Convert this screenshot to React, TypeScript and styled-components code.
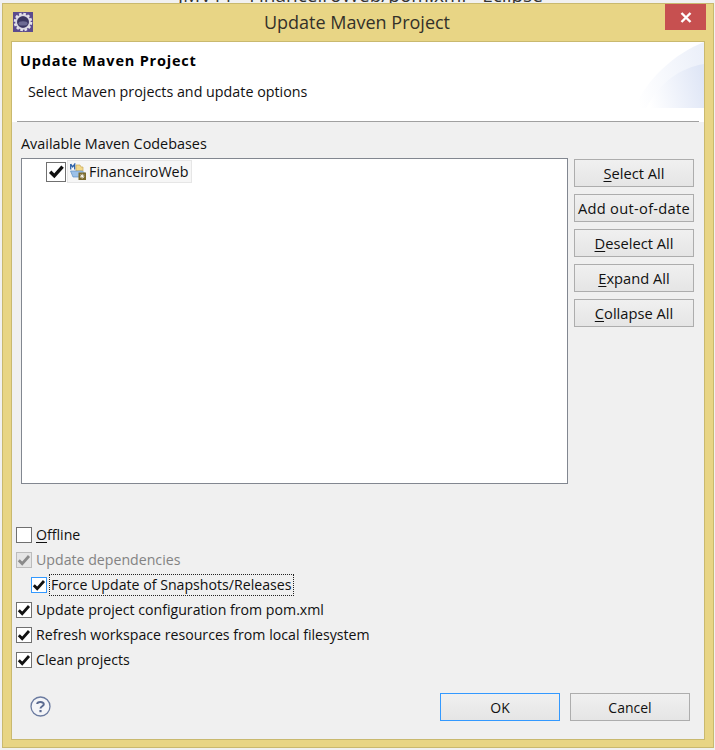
import React from "react";
import styled, { createGlobalStyle } from "styled-components";

const GlobalStyle = createGlobalStyle`
  html, body {
    margin: 0;
    padding: 0;
    background: #f1f1f1;
    overflow: hidden;
  }
  body {
    font-family: "Open Sans", "Liberation Sans", sans-serif;
    font-size: 14px;
    color: #111;
  }
`;

const Desktop = styled.div`
  position: relative;
  width: 715px;
  height: 750px;
  overflow: hidden;
  padding: 3px 1px 2px 2px;
  box-sizing: border-box;
`;

const BehindTitle = styled.div`
  position: absolute;
  top: -15px;
  left: 178px;
  font-size: 19px;
  line-height: 20px;
  white-space: nowrap;
  color: #333;
`;

const BehindTab = styled.div`
  position: absolute;
  bottom: -11px;
  left: 12px;
  font-size: 13px;
  line-height: 14px;
  color: #222;
`;

const Frame = styled.div`
  position: relative;
  height: 745px;
  box-sizing: border-box;
  background: #e8d585;
  border: 1px solid #c9b96f;
  padding: 0 8px 7px 8px;
  display: flex;
  flex-direction: column;
`;

const TitleBar = styled.div`
  height: 37px;
  flex: none;
  display: flex;
  align-items: center;
  justify-content: center;
  position: relative;
  font-size: 18px;
  color: #33312a;
  padding: 0 2px 1px 0;
  box-sizing: border-box;
`;

const AppIcon = styled.svg`
  position: absolute;
  left: 2px;
  top: 8px;
  width: 20px;
  height: 20px;
`;

const CloseButton = styled.div`
  position: absolute;
  right: -1px;
  top: 0;
  width: 41px;
  height: 26px;
  background: #c75050;
  display: flex;
  align-items: center;
  justify-content: center;
`;

const Client = styled.div`
  flex: 1;
  display: flex;
  flex-direction: column;
  background: #f0f0f0;
  border: 1px solid #c9b96f;
  min-height: 0;
`;

const Header = styled.div`
  position: relative;
  height: 79px;
  flex: none;
  background: #fff;
  box-sizing: border-box;
  padding: 8px 0 0 8px;
`;

const HeaderTitle = styled.div`
  font-weight: 700;
  font-size: 14.5px;
  letter-spacing: 0.8px;
  line-height: 22px;
  color: #000;
`;

const HeaderText = styled.div`
  font-size: 14.3px;
  line-height: 22px;
  margin: 9px 0 0 8px;
`;

const Banner = styled.svg`
  position: absolute;
  right: 0;
  top: 0;
  width: 70px;
  height: 66px;
`;

const SeparatorBand = styled.div`
  height: 2px;
  flex: none;
  padding: 0 5px;
  background: linear-gradient(#fff 50%, #f0f0f0 50%);
`;

const Separator = styled.div`
  height: 1px;
  background: #a0a0a0;
`;

const Body = styled.div`
  flex: 1;
  display: flex;
  flex-direction: column;
  padding: 11px 9px 0 9px;
`;

const SectionLabel = styled.div`
  line-height: 20px;
  height: 20px;
  font-size: 14.4px;
`;

const ListRow = styled.div`
  display: flex;
  gap: 6px;
  margin-top: 4px;
`;

const TreeBox = styled.div`
  width: 547px;
  height: 326px;
  flex: none;
  box-sizing: border-box;
  background: #fff;
  border: 1px solid #828790;
  padding: 1px 0 0 24px;
`;

const TreeItem = styled.div`
  display: flex;
  align-items: center;
`;

const TreeLabel = styled.div`
  display: flex;
  align-items: center;
  gap: 3px;
  height: 23px;
  box-sizing: border-box;
  padding: 0 3px 0 2px;
  margin-left: 1px;
  background: #f6f6f6;
  border: 1px solid #e6e6e6;
  font-size: 14.3px;
`;

const SideButtons = styled.div`
  display: flex;
  flex-direction: column;
  gap: 7px;
  margin-top: 1px;
  font-size: 14.7px;
`;

const PushButton = styled.div<{ $default?: boolean; $spaced?: boolean }>`
  width: 120px;
  height: 28px;
  box-sizing: border-box;
  display: flex;
  align-items: center;
  justify-content: center;
  white-space: nowrap;
  letter-spacing: ${(p) => (p.$spaced ? "0.28px" : "normal")};
  border: 1px solid ${(p) => (p.$default ? "#3399ff" : "#adadad")};
  background: linear-gradient(#f0f0f0, #e5e5e5);
  u {
    text-underline-offset: 2px;
  }
`;

const Options = styled.div`
  margin: 38px 0 0 -5px;
  display: flex;
  flex-direction: column;
  font-size: 14.17px;
`;

const OptionRow = styled.div<{ $indent?: boolean; $disabled?: boolean }>`
  height: 25px;
  display: flex;
  align-items: center;
  gap: 4px;
  padding-left: ${(p) => (p.$indent ? 15 : 0)}px;
  color: ${(p) => (p.$disabled ? "#838383" : "inherit")};
  u {
    text-underline-offset: 2px;
  }
`;

const FocusText = styled.span`
  outline: 1px dotted #222;
  outline-offset: 0;
  padding: 0 1px;
  margin-left: -1px;
  line-height: 20px;
`;

const CheckBox = styled.div<{ $size?: number; $tone?: "normal" | "disabled" | "focus" }>`
  width: ${(p) => p.$size ?? 16}px;
  height: ${(p) => p.$size ?? 16}px;
  flex: none;
  box-sizing: border-box;
  display: flex;
  align-items: center;
  justify-content: center;
  background: ${(p) => (p.$tone === "disabled" ? "#e5e5e5" : "#fff")};
  border: 1px solid
    ${(p) =>
      p.$tone === "disabled" ? "#bcbcbc" : p.$tone === "focus" ? "#3399ff" : "#707070"};
`;

const Footer = styled.div`
  margin-top: 21px;
  display: flex;
  align-items: center;
  justify-content: space-between;
  padding: 0 5px 0 9px;
`;

const FooterButtons = styled.div`
  display: flex;
  gap: 10px;
`;

const HelpGlyph = styled.svg`
  width: 21px;
  height: 21px;
  margin-bottom: 2px;
`;

const Check = ({ color = "#111", size = 14 }: { color?: string; size?: number }) => (
  <svg width={size} height={size} viewBox="0 0 14 14">
    <path d="M1.8 7.2 L5.2 10.6 L12 3" fill="none" stroke={color} strokeWidth="2.8" />
  </svg>
);

const GearIcon = () => (
  <AppIcon viewBox="0 0 20 20">
    <rect width="20" height="20" fill="#5b4b8e" />
    <circle cx="10" cy="10" r="6.8" fill="none" stroke="#d9d7e0" strokeWidth="2" />
    <circle cx="10" cy="10" r="8.2" fill="none" stroke="#e4e2ea" strokeWidth="2.2" strokeDasharray="2.6 1.7" />
    <circle cx="10" cy="10" r="5.8" fill="#3a3560" />
    <ellipse cx="10" cy="11.4" rx="4.6" ry="2.2" fill="#6d6a94" />
  </AppIcon>
);

const MavenFolderIcon = () => (
  <svg width="16" height="17" viewBox="0 0 16 17">
    <path d="M0.7 1 V6.5 M0.7 1.2 L2.7 4 L4.7 1.2 V6.5" fill="none" stroke="#2f62a8" strokeWidth="1.3" />
    <path d="M6 2 H10 L11 4 H13 V8 H6 Z" fill="#f3d98a" stroke="#c9a95a" strokeWidth="0.7" />
    <path d="M0.5 8 H12.5 L15 10.5 L10 14 H3 Z" fill="#9cc1e8" stroke="#5f8fc4" strokeWidth="0.7" />
    <rect x="8.5" y="9.5" width="7.5" height="7.5" fill="#7a6a2c" />
    <path d="M12.2 10.8 V15.6 M10 13.2 H14.4 M10.6 11.6 L13.8 14.8 M13.8 11.6 L10.6 14.8" stroke="#fff" strokeWidth="0.8" />
  </svg>
);

const HelpIcon = () => (
  <HelpGlyph viewBox="0 0 21 21">
    <circle cx="10.5" cy="10.5" r="9.5" fill="#f4f5f8" stroke="#6b7ba0" strokeWidth="1.3" />
    <path
      d="M7.2 8 C7.2 5.6 13.8 5.2 13.8 8.2 C13.8 10.3 10.5 10.2 10.5 12.6"
      fill="none"
      stroke="#5a6a90"
      strokeWidth="2"
    />
    <rect x="9.4" y="14" width="2.2" height="2.2" fill="#5a6a90" />
  </HelpGlyph>
);

const App = () => {
  return (
    <Desktop>
      <GlobalStyle />
      <BehindTitle>JMV11 - FinanceiroWeb/pom.xml - Eclipse</BehindTitle>
      <BehindTab>Servers</BehindTab>
      <Frame>
        <TitleBar>
          <GearIcon />
          Update Maven Project
          <CloseButton>
            <svg width="12" height="11" viewBox="0 0 12 11">
              <path d="M1.5 1 L10.5 10 M10.5 1 L1.5 10" stroke="#fff" strokeWidth="2.4" />
            </svg>
          </CloseButton>
        </TitleBar>
        <Client>
          <Header>
            <HeaderTitle>Update Maven Project</HeaderTitle>
            <HeaderText>Select Maven projects and update options</HeaderText>
            <Banner viewBox="0 0 70 66">
              <defs>
                <linearGradient id="bannerFade" x1="0" x2="1" y1="0.6" y2="0.4">
                  <stop offset="0" stopColor="#ffffff" />
                  <stop offset="1" stopColor="#dfe6f6" />
                </linearGradient>
              </defs>
              <path d="M0 66 C14 36 40 12 70 0 V66 Z" fill="url(#bannerFade)" opacity="0.6" />
              <path d="M12 66 C26 40 46 26 70 22 V66 Z" fill="url(#bannerFade)" />
            </Banner>
          </Header>
          <SeparatorBand>
            <Separator />
          </SeparatorBand>
          <Body>
            <SectionLabel>Available Maven Codebases</SectionLabel>
            <ListRow>
              <TreeBox>
                <TreeItem>
                  <CheckBox $size={20}>
                    <Check size={17} />
                  </CheckBox>
                  <TreeLabel>
                    <MavenFolderIcon />
                    FinanceiroWeb
                  </TreeLabel>
                </TreeItem>
              </TreeBox>
              <SideButtons>
                <PushButton>
                  <span>
                    <u>S</u>elect All
                  </span>
                </PushButton>
                <PushButton $spaced>Add out-of-date</PushButton>
                <PushButton>
                  <span>
                    <u>D</u>eselect All
                  </span>
                </PushButton>
                <PushButton>
                  <span>
                    <u>E</u>xpand All
                  </span>
                </PushButton>
                <PushButton>
                  <span>
                    <u>C</u>ollapse All
                  </span>
                </PushButton>
              </SideButtons>
            </ListRow>
            <Options>
              <OptionRow>
                <CheckBox />
                <span>
                  <u>O</u>ffline
                </span>
              </OptionRow>
              <OptionRow $disabled>
                <CheckBox $tone="disabled">
                  <Check color="#8a8a8a" />
                </CheckBox>
                Update dependencies
              </OptionRow>
              <OptionRow $indent>
                <CheckBox $tone="focus">
                  <Check />
                </CheckBox>
                <FocusText>Force Update of Snapshots/Releases</FocusText>
              </OptionRow>
              <OptionRow>
                <CheckBox>
                  <Check />
                </CheckBox>
                Update project configuration from pom.xml
              </OptionRow>
              <OptionRow>
                <CheckBox>
                  <Check />
                </CheckBox>
                Refresh workspace resources from local filesystem
              </OptionRow>
              <OptionRow>
                <CheckBox>
                  <Check />
                </CheckBox>
                Clean projects
              </OptionRow>
            </Options>
            <Footer>
              <HelpIcon />
              <FooterButtons>
                <PushButton $default>OK</PushButton>
                <PushButton>Cancel</PushButton>
              </FooterButtons>
            </Footer>
          </Body>
        </Client>
      </Frame>
    </Desktop>
  );
};

export default App;
